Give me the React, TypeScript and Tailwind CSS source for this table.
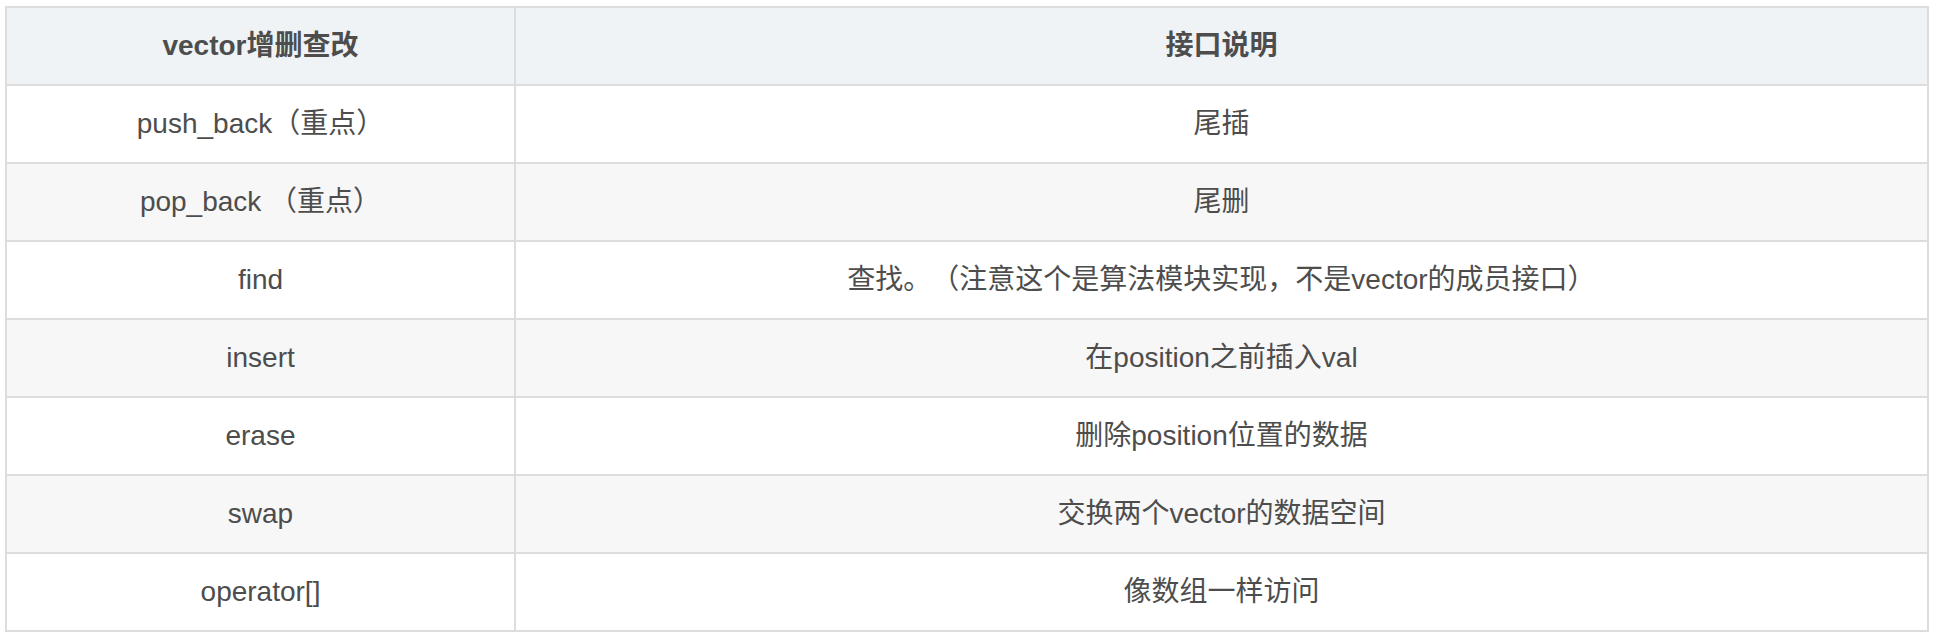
import React from "react";

const rows: [string, string][] = [
  ["push_back（重点）", "尾插"],
  ["pop_back （重点）", "尾删"],
  ["find", "查找。（注意这个是算法模块实现，不是vector的成员接口）"],
  ["insert", "在position之前插入val"],
  ["erase", "删除position位置的数据"],
  ["swap", "交换两个vector的数据空间"],
  ["operator[]", "像数组一样访问"],
];

export default function App() {
  return (
    <div
      className="w-[1937px] h-[637px] bg-white pt-[6px] pl-[5px] text-[#4d4d4d] [text-spacing-trim:space-all]"
      style={{ fontFamily: '"Liberation Sans", "Noto Sans CJK SC", sans-serif' }}
    >
      <table className="border-collapse w-[1924px] text-[28px] table-fixed">
        <colgroup>
          <col className="w-[509px]" />
          <col />
        </colgroup>
        <thead>
          <tr className="bg-[#eff3f6]">
            <th className="border-2 border-[#dddddd] h-[78px] p-0 font-bold text-center">vector增删查改</th>
            <th className="border-2 border-[#dddddd] h-[78px] p-0 font-bold text-center">接口说明</th>
          </tr>
        </thead>
        <tbody>
          {rows.map(([a, b], i) => (
            <tr key={i} className={i % 2 === 1 ? "bg-[#f7f7f7]" : "bg-white"}>
              <td className="border-2 border-[#dddddd] h-[78px] p-0 text-center whitespace-pre">{a}</td>
              <td className="border-2 border-[#dddddd] h-[78px] p-0 text-center">{b}</td>
            </tr>
          ))}
        </tbody>
      </table>
    </div>
  );
}
